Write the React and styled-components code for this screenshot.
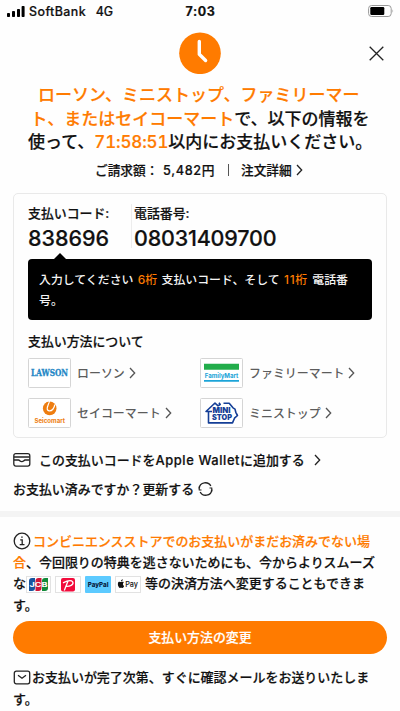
import React from "react";
import styled, { createGlobalStyle } from "styled-components";

const Global = createGlobalStyle`
  * { box-sizing: border-box; }
  html, body { margin: 0; background: #fefefe; }
  body {
    font-family: Inter, "Noto Sans CJK JP", sans-serif;
    font-weight: 500;
    color: #111;
    height: 711px;
    overflow: hidden;
    -webkit-text-stroke: 0.2px currentColor;
  }
  svg text { -webkit-text-stroke: 0; }
  p, h1, h2 { margin: 0; font-weight: inherit; }
`;

const Screen = styled.main`
  width: 400px;
  height: 711px;
  overflow: hidden;
  display: flex;
  flex-direction: column;
`;
const StatusBar = styled.header`
  height: 22px;
  display: grid;
  grid-template-columns: 1fr auto 1fr;
  align-items: center;
  padding: 0 6px 0 7px;
  font-size: 12.4px;
  flex: none;
`;
const Carrier = styled.div`
  display: flex;
  align-items: center;
  letter-spacing: 0.45px;
  svg { margin-right: 4px; }
`;
const Network = styled.span`
  margin-left: 9.5px;
  letter-spacing: 0;
`;
const Time = styled.div`
  font-weight: 700;
  font-size: 12.5px;
  letter-spacing: 0.6px;
`;
const Battery = styled.svg`
  justify-self: end;
`;
const Hero = styled.div`
  height: 62px;
  flex: none;
  display: grid;
  grid-template-columns: 1fr 42px 1fr;
  padding: 10px 16px 0;
  align-items: start;
`;
const Clock = styled.svg`
  grid-column: 2;
`;
const Close = styled.button`
  justify-self: end;
  margin-top: 13.5px;
  border: 0;
  padding: 0;
  background: none;
  line-height: 0;
`;
const Title = styled.h1`
  flex: none;
  font-size: 17px;
  line-height: 23.7px;
  height: 70px;
`;
const Line = styled.span`
  display: block;
  white-space: nowrap;
  padding-left: ${(p) => p.$indent || 0}px;
`;
const Accent = styled.span`
  color: #ff7b00;
  font-variant-numeric: ${(p) => (p.$tabular ? "tabular-nums" : "normal")};
  letter-spacing: ${(p) => p.$tracking || 0}px;
`;
const Summary = styled.div`
  height: 39px;
  flex: none;
  display: flex;
  align-items: center;
  padding: 0 0 8px 95px;
  font-size: 12.7px;
  white-space: nowrap;
`;
const Amount = styled.span`
  width: 133px;
  display: flex;
`;
const AmountLabel = styled.span`
  width: 68px;
`;
const Price = styled.span`
  letter-spacing: 0.65px;
`;
const Bar = styled.i`
  width: 1px;
  height: 12px;
  background: #555;
  margin-right: 12px;
`;
const Chevron = styled.svg`
  flex: none;
  margin-left: ${(p) => p.$gap || 4}px;
`;
const Card = styled.section`
  flex: none;
  margin: 0 13px;
  height: 245px;
  border: 1px solid #e9e9e9;
  border-radius: 5px;
  padding: 10px 14px 0;
`;
const Codes = styled.div`
  display: flex;
  height: 44px;
`;
const Code = styled.div`
  width: ${(p) => p.$width}px;
  padding-left: ${(p) => p.$pad || 0}px;
  border-left: ${(p) => (p.$pad ? "1px solid #ededed" : "0")};
`;
const CodeLabel = styled.div`
  font-size: 12.9px;
  line-height: 20px;
  white-space: nowrap;
`;
const CodeValue = styled.div`
  font-size: 21.5px;
  line-height: 28px;
  letter-spacing: ${(p) => p.$tracking}px;
  white-space: nowrap;
`;
const Tip = styled.div`
  position: relative;
  margin-top: 11px;
  width: 344px;
  height: 61px;
  border-radius: 4px;
  background: #000;
  color: #f4f4f4;
  padding: 11px 11px 0;
  font-size: 11.9px;
  line-height: 20.5px;
  word-spacing: 1.2px;
  white-space: nowrap;
  -webkit-text-stroke: 0;
  &::before {
    content: "";
    position: absolute;
    left: 25px;
    top: -6px;
    border: 7px solid transparent;
    border-top: 0;
    border-bottom-color: #000;
  }
`;
const Methods = styled.h2`
  font-size: 12.9px;
  line-height: 20px;
  margin: 11.5px 0 6.5px;
`;
const Stores = styled.div`
  display: grid;
  grid-template-columns: 172px 172px;
  row-gap: 10px;
`;
const Store = styled.a`
  display: flex;
  align-items: center;
  height: 30px;
  font-size: 11.95px;
  color: #5c5c5c;
  -webkit-text-stroke: 0;
  white-space: nowrap;
`;
const StoreName = styled.span`
  padding-bottom: 2px;
`;
const Logo = styled.svg`
  width: 43px;
  height: 29.5px;
  border: 1px solid #d5d5d5;
  border-radius: 1.5px;
  background: #fff;
  margin-right: 6px;
  flex: none;
`;
const Action = styled.div`
  flex: none;
  display: flex;
  align-items: center;
  height: 29px;
  margin-top: ${(p) => p.$top || 0}px;
  padding-left: 13px;
  font-size: 12.95px;
  white-space: nowrap;
`;
const ActionText = styled.span`
  padding-bottom: 2px;
`;
const Brand = styled.span`
  letter-spacing: 0.58px;
`;
const WalletIcon = styled.svg`
  margin-right: 8px;
`;
const RefreshIcon = styled.svg`
  margin-left: 4px;
`;
const Gap = styled.div`
  flex: none;
  height: 6.5px;
  margin-top: 7px;
  background: #f4f4f4;
`;
const Notice = styled.p`
  flex: none;
  padding: ${(p) => p.$top}px 0 0 13px;
  font-size: 12.97px;
  line-height: 21.4px;
`;
const Row = styled.span`
  display: flex;
  align-items: center;
  white-space: nowrap;
  height: 21.4px;
`;
const NoticeIcon = styled.svg`
  margin-right: ${(p) => p.$gap}px;
  flex: none;
`;
const Pay = styled.svg`
  width: ${(p) => p.$w || 26}px;
  height: 17px;
  margin-right: ${(p) => p.$gap || 4}px;
  flex: none;
`;
const Change = styled.button`
  flex: none;
  margin: 4.4px 13px 0;
  height: 33px;
  border: 0;
  border-radius: 17px;
  background: #ff7b00;
  color: #fff;
  font: inherit;
  font-size: 12.9px;
  line-height: 31px;
  padding: 0;
`;

function Next({ gap, color = "#222" }) {
  return (
    <Chevron $gap={gap} width="7" height="12" viewBox="0 0 7 12" fill="none" stroke={color} strokeWidth="1.3">
      <path d="M1 1l4.700 5L1 11" />
    </Chevron>
  );
}

function Lawson() {
  return (
    <Logo viewBox="0 0 41 27.5">
      <text x="2" y="17" textLength="37" lengthAdjust="spacingAndGlyphs" fontFamily="DejaVu Serif" fontWeight="700" fontSize="8.4" fill="#2487c6" stroke="#2487c6" strokeWidth=".3">LAWSON</text>
    </Logo>
  );
}
function FamilyMart() {
  return (
    <Logo viewBox="0 0 41 27.5">
      <path fill="#22ad4b" d="M3 4.700h35v6H3z" />
      <text x="3.800" y="18.700" textLength="33.500" lengthAdjust="spacingAndGlyphs" fontFamily="Inter" fontWeight="700" fontSize="6.800" fill="#1ca4d8">FamilyMart</text>
      <path fill="#1ca4d8" d="M3 21h35v1.700H3z" />
    </Logo>
  );
}
function Seicomart() {
  return (
    <Logo viewBox="0 0 41 27.5">
      <circle cx="20.700" cy="9.400" r="6.800" fill="#ee7d10" />
      <path d="M20.500 2l-1.500 4.200q-2 5 1 5.600c3 .4 5.300-2.500 5.800-6.300" fill="none" stroke="#fff" strokeWidth="1.300" />
      <path d="M16.500 4.200q1.500-1.300 3.200-1.500l-1 2.700z" fill="#ee7d10" />
      <text x="5.500" y="23.500" textLength="30.500" lengthAdjust="spacingAndGlyphs" fontFamily="Inter" fontWeight="700" fontSize="6" fill="#ee7d10">Seicomart</text>
    </Logo>
  );
}
function MiniStop() {
  return (
    <Logo viewBox="0 0 41 27.5">
      <path d="M11 12.500H5L14 4l3 2.800 2.200-1.300-1.200-1.800M22.500 4.300h5.700l3.800 4.500 2 1.300.8 3.200 1.700 3.200-3 2.700-2 4.700H7.500V13" fill="none" stroke="#143e96" strokeWidth="1.600" strokeLinejoin="round" />
      <text x="11.500" y="13.800" textLength="18" lengthAdjust="spacingAndGlyphs" fontFamily="Inter" fontWeight="900" fontSize="7.200" fill="#143e96">MINI</text>
      <text x="11" y="20.900" textLength="20" lengthAdjust="spacingAndGlyphs" fontFamily="Inter" fontWeight="900" fontSize="7.400" fill="#143e96">STOP</text>
    </Logo>
  );
}

const stores = [
  ["ローソン", Lawson, 4.5],
  ["ファミリーマート", FamilyMart, 3.5],
  ["セイコーマート", Seicomart, 4],
  ["ミニストップ", MiniStop, 4],
];

export default function App() {
  return (
    <Screen>
      <Global />
      <StatusBar>
        <Carrier>
          <svg width="18" height="11" viewBox="0 0 18 11">
            <rect x="0" y="7" width="3" height="4" rx=".8" />
            <rect x="5" y="5" width="3" height="6" rx=".8" />
            <rect x="10" y="3" width="3" height="8" rx=".8" />
            <rect x="14.6" y="0" width="3" height="11" rx=".8" />
          </svg>
          SoftBank
          <Network>4G</Network>
        </Carrier>
        <Time>7:03</Time>
        <Battery width="26" height="12" viewBox="0 0 26 12">
          <rect x=".6" y=".5" width="22.6" height="11" rx="3" fill="#fff" stroke="#999" />
          <rect x="2.3" y="2" width="14" height="8" rx="1.2" />
          <path d="M24.5 4.2q1.4 1.8 0 3.6z" fill="#999" />
        </Battery>
      </StatusBar>

      <Hero>
        <Clock width="42" height="42" viewBox="0 0 42 42">
          <circle cx="21" cy="21.3" r="20.8" fill="#ff7b00" />
          <path d="M20.3 9.5v12.8l6.3 6.2" fill="none" stroke="#fff" strokeWidth="3.4" strokeLinecap="round" strokeLinejoin="round" />
        </Clock>
        <Close aria-label="閉じる">
          <svg width="15" height="15" viewBox="0 0 15 15" stroke="#222" strokeWidth="1.3">
            <path d="M.7.7l13.6 13.6M14.3.7L.7 14.3" />
          </svg>
        </Close>
      </Hero>

      <Title>
        <Line $indent={38}><Accent>ローソン、ミニストップ、ファミリーマー</Accent></Line>
        <Line $indent={30.5}><Accent>ト、またはセイコーマート</Accent>で、以下の情報を</Line>
        <Line $indent={28}>使って、<Accent $tabular $tracking={-0.15}>71:58:51</Accent>以内にお支払いください。</Line>
      </Title>

      <Summary>
        <Amount><AmountLabel>ご請求額：</AmountLabel><Price>5,482円</Price></Amount>
        <Bar />注文詳細<Next gap={4} />
      </Summary>

      <Card>
        <Codes>
          <Code $width={103}>
            <CodeLabel>支払いコード:</CodeLabel>
            <CodeValue $tracking={-0.05}>838696</CodeValue>
          </Code>
          <Code $width={180} $pad={2}>
            <CodeLabel>電話番号:</CodeLabel>
            <CodeValue $tracking={-0.2}>08031409700</CodeValue>
          </Code>
        </Codes>
        <Tip>
          入力してください <Accent>6桁</Accent> 支払いコード、そして <Accent $tracking={0.7}>11桁</Accent> 電話番<br />号。
        </Tip>
        <Methods>支払い方法について</Methods>
        <Stores>
          {stores.map(([name, Mark, gap]) => (
            <Store key={name}><Mark /><StoreName>{name}</StoreName><Next gap={gap} color="#555" /></Store>
          ))}
        </Stores>
      </Card>

      <Action $top={7.5}>
        <WalletIcon width="18" height="14" viewBox="0 0 18 14" fill="none" stroke="#222" strokeWidth="1.3">
          <rect x=".8" y=".7" width="16" height="12.4" rx="2" />
          <path d="M1 4h15.6M1 7h4.5q.7 0 1.2.8 2.1 1.8 4.2 0 .5-.8 1.2-.8h4.5" />
        </WalletIcon>
        <ActionText>この支払いコードを<Brand>Apple Wallet</Brand>に追加する</ActionText><Next gap={9.5} />
      </Action>
      <Action>
        <ActionText>お支払い済みですか？更新する</ActionText>
        <RefreshIcon width="15" height="14" viewBox="0 0 15 14" fill="none" stroke="#222" strokeWidth="1.4">
          <path d="M1.200 6.500C1.700-.6 10.500-.7 12.800 4M13.800 7.500C13.300 14.600 4.500 14.700 2.200 10" />
          <path d="M1.200 4.500v3.700M13.800 9.500V5.800M.8 8h2.700M14.200 6h-2.700" strokeWidth="1.100" />
        </RefreshIcon>
      </Action>
      <Gap />

      <Notice $top={13.7}>
        <Row>
          <NoticeIcon $gap={2} width="18" height="18" viewBox="0 0 18 18" fill="none" stroke="#222" strokeWidth="1.3">
            <circle cx="9" cy="9" r="7.8" />
            <path d="M7.2 7.8H9.200v4.700M6.700 12.700h4.800M8.200 5.200h1.500" />
          </NoticeIcon>
          <Accent>コンビニエンスストアでのお支払いがまだお済みでない場</Accent>
        </Row>
        <Row><Accent>合</Accent>、今回限りの特典を逃さないためにも、今からよりスムーズ</Row>
        <Row>
          な
          <Pay $w={25} $gap={4} viewBox="0 0 25 17">
            <rect x=".5" y=".5" width="24" height="16" fill="#fff" stroke="#e2e2e2" />
            <path d="M6 2h3v10q0 3-3 3H3V5q0-3 3-3z" fill="#17559f" />
            <path d="M12.500 2h3v10q0 3-3 3H9.500V5q0-3 3-3z" fill="#cf173a" />
            <path d="M19 2h3v10q0 3-3 3h-3V5q0-3 3-3z" fill="#118a39" />
            <text x="3.400" y="10.800" textLength="18" lengthAdjust="spacingAndGlyphs" fontFamily="Inter" fontWeight="700" fontSize="6" fill="#fff">JCB</text>
          </Pay>
          <Pay viewBox="0 0 26 17">
            <rect x=".5" y=".5" width="25" height="16" fill="#fff" stroke="#e2e2e2" />
            <rect x="6" y="2" width="14" height="13.500" rx="2" fill="#f20c3c" />
            <path d="M8 6.800q7.500-3.600 9.700-1c1.500 3-3 5-7.500 4.500M13 5l-3.700 9.500" fill="none" stroke="#fff" strokeWidth="1.300" />
          </Pay>
          <Pay viewBox="0 0 26 17">
            <rect width="26" height="17" rx="1" fill="#5ccaff" />
            <text x="2.700" y="11" textLength="20.800" lengthAdjust="spacingAndGlyphs" fontFamily="Inter" fontWeight="800" fontSize="6.500" fill="#071c42">PayPal</text>
          </Pay>
          <Pay viewBox="0 0 26 17">
            <rect x=".5" y=".5" width="25" height="16" fill="#fff" stroke="#e2e2e2" />
            <path d="M8.800 6.200C7.700 5.200 6.700 6 6 6 5.200 6 3.400 4.700 2.900 7.400c-.3 2.200 1.300 4.500 2.100 4.500.6 0 1-.4 1.700-.1 1.400.7 2-.8 2.400-1.800-1.500-.8-1.600-2.700-.3-3.800zM6 5.400c0-1 .7-2 1.800-2.100.1 1.100-.8 2.100-1.800 2.100z" fill="#111" />
            <text x="10.200" y="11.400" textLength="12.800" lengthAdjust="spacingAndGlyphs" fontFamily="Inter" fontSize="7.600" fill="#111">Pay</text>
          </Pay>
          等の決済方法へ変更することもできま
        </Row>
        <Row>す。</Row>
      </Notice>

      <Change>支払い方法の変更</Change>

      <Notice $top={13.5}>
        <Row>
          <NoticeIcon $gap={1} width="18" height="15" viewBox="0 0 18 15" fill="none" stroke="#222" strokeWidth="1.300">
            <rect x="1.300" y="1.200" width="15.400" height="12.600" rx="2" />
            <path d="M5 5.300l4 3 4-3" />
          </NoticeIcon>
          お支払いが完了次第、すぐに確認メールをお送りいたしま
        </Row>
        <Row>す。</Row>
      </Notice>
    </Screen>
  );
}
